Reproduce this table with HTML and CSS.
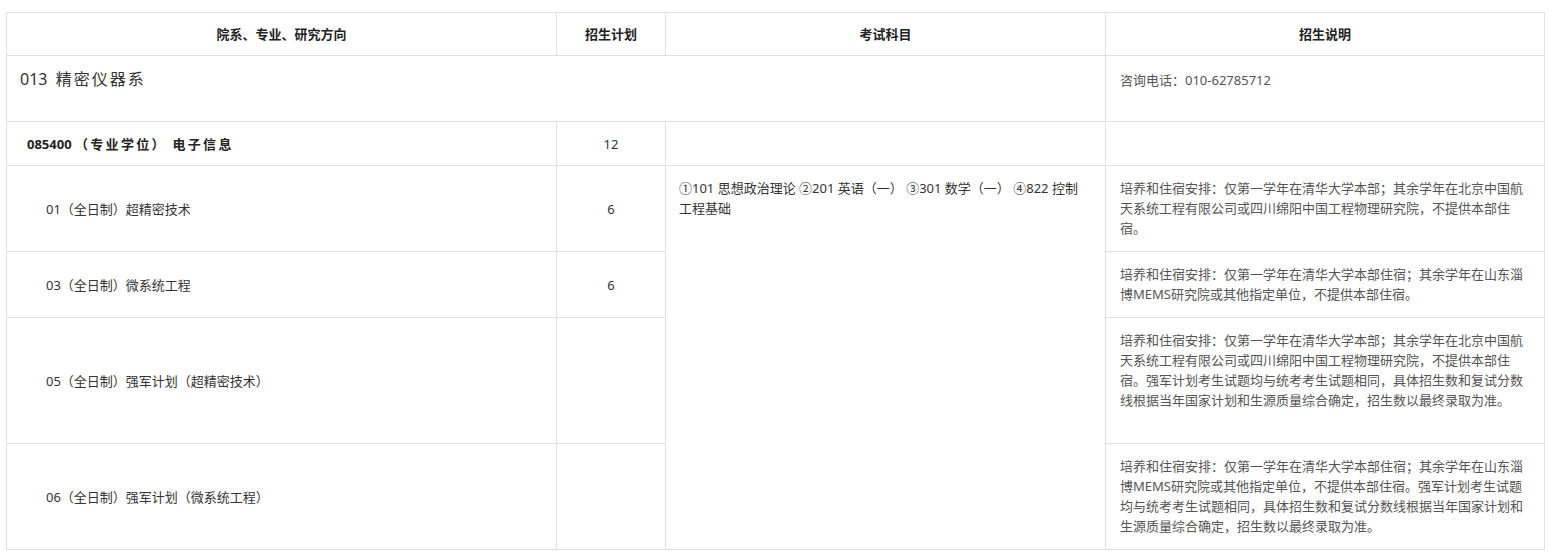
FILE: index.html
```html
<!DOCTYPE html>
<html lang="zh-CN">
<head>
<meta charset="utf-8">
<title>精密仪器系</title>
<link rel="stylesheet" href="styles.css">
</head>
<body>
<div class="wrap">
<table class="plan">
  <colgroup>
    <col class="c1"><col class="c2"><col class="c3"><col class="c4">
  </colgroup>
  <thead>
    <tr class="r-head">
      <th>院系、专业、研究方向</th>
      <th>招生计划</th>
      <th>考试科目</th>
      <th>招生说明</th>
    </tr>
  </thead>
  <tbody>
    <tr class="r-dept">
      <td colspan="3" class="dept">013&nbsp;&nbsp;<span class="cn">精密仪器系</span></td>
      <td class="desc">咨询电话：010-62785712</td>
    </tr>
    <tr class="r-major">
      <td class="major">085400 <span class="cn">（专业学位） 电子信息</span></td>
      <td class="num">12</td>
      <td></td>
      <td></td>
    </tr>
    <tr class="r-01">
      <td class="dir">01（全日制）超精密技术</td>
      <td class="num">6</td>
      <td rowspan="4" class="exam">①101 思想政治理论 ②201 英语（一） ③301 数学（一） ④822 控制工程基础</td>
      <td class="desc">培养和住宿安排：仅第一学年在清华大学本部；其余学年在北京中国航天系统工程有限公司或四川绵阳中国工程物理研究院，不提供本部住宿。</td>
    </tr>
    <tr class="r-03">
      <td class="dir">03（全日制）微系统工程</td>
      <td class="num">6</td>
      <td class="desc">培养和住宿安排：仅第一学年在清华大学本部住宿；其余学年在山东淄博MEMS研究院或其他指定单位，不提供本部住宿。</td>
    </tr>
    <tr class="r-05">
      <td class="dir">05（全日制）强军计划（超精密技术）</td>
      <td class="num"></td>
      <td class="desc">培养和住宿安排：仅第一学年在清华大学本部；其余学年在北京中国航天系统工程有限公司或四川绵阳中国工程物理研究院，不提供本部住宿。强军计划考生试题均与统考考生试题相同，具体招生数和复试分数线根据当年国家计划和生源质量综合确定，招生数以最终录取为准。</td>
    </tr>
    <tr class="r-06">
      <td class="dir">06（全日制）强军计划（微系统工程）</td>
      <td class="num"></td>
      <td class="desc">培养和住宿安排：仅第一学年在清华大学本部住宿；其余学年在山东淄博MEMS研究院或其他指定单位，不提供本部住宿。强军计划考生试题均与统考考生试题相同，具体招生数和复试分数线根据当年国家计划和生源质量综合确定，招生数以最终录取为准。</td>
    </tr>
  </tbody>
</table>
</div>
</body>
</html>
```

FILE: styles.css
```css
html, body {
  margin: 0;
  padding: 0;
  background: #fff;
}
.wrap {
  padding: 12px 6px 0 6px;
}
.plan {
  border-collapse: collapse;
  table-layout: fixed;
  width: 1539px;
  font-family: "Noto Sans", "Noto Sans CJK SC", sans-serif;
  font-size: 13px;
  line-height: 20px;
  color: #333;
}
.c1 { width: 550px; }
.c2 { width: 109px; }
.c3 { width: 440px; }
.c4 { width: 439px; }
.plan th, .plan td {
  border: 1px solid #e1e1e1;
  padding: 0 13px;
  vertical-align: middle;
  text-align: left;
}
.plan th {
  text-align: center;
  font-weight: bold;
  color: #222;
}
.r-head { height: 43px; }
.r-dept { height: 66px; }
.r-major { height: 44px; }
.r-01 { height: 86px; }
.r-03 { height: 66px; }
.r-05 { height: 126px; }
.r-06 { height: 106px; }

.plan td.dept {
  vertical-align: top;
  padding-top: 13px;
  font-size: 16px;
  color: #333;
}
.plan td.dept .cn {
  letter-spacing: 2px;
}
.plan td.major {
  padding-left: 20px;
  font-weight: bold;
  color: #222;
}
.plan td.major .cn {
  letter-spacing: 2.3px;
}
.plan td.dir {
  padding-left: 39px;
}
.plan td.num {
  text-align: center;
  padding: 0;
}
.plan td.exam {
  vertical-align: top;
  padding: 12px 20px 0 13px;
}
.plan td.desc {
  vertical-align: top;
  padding: 12px 14px;
  color: #555;
}
.plan tr.r-dept td.desc {
  padding-top: 14px;
}
```
